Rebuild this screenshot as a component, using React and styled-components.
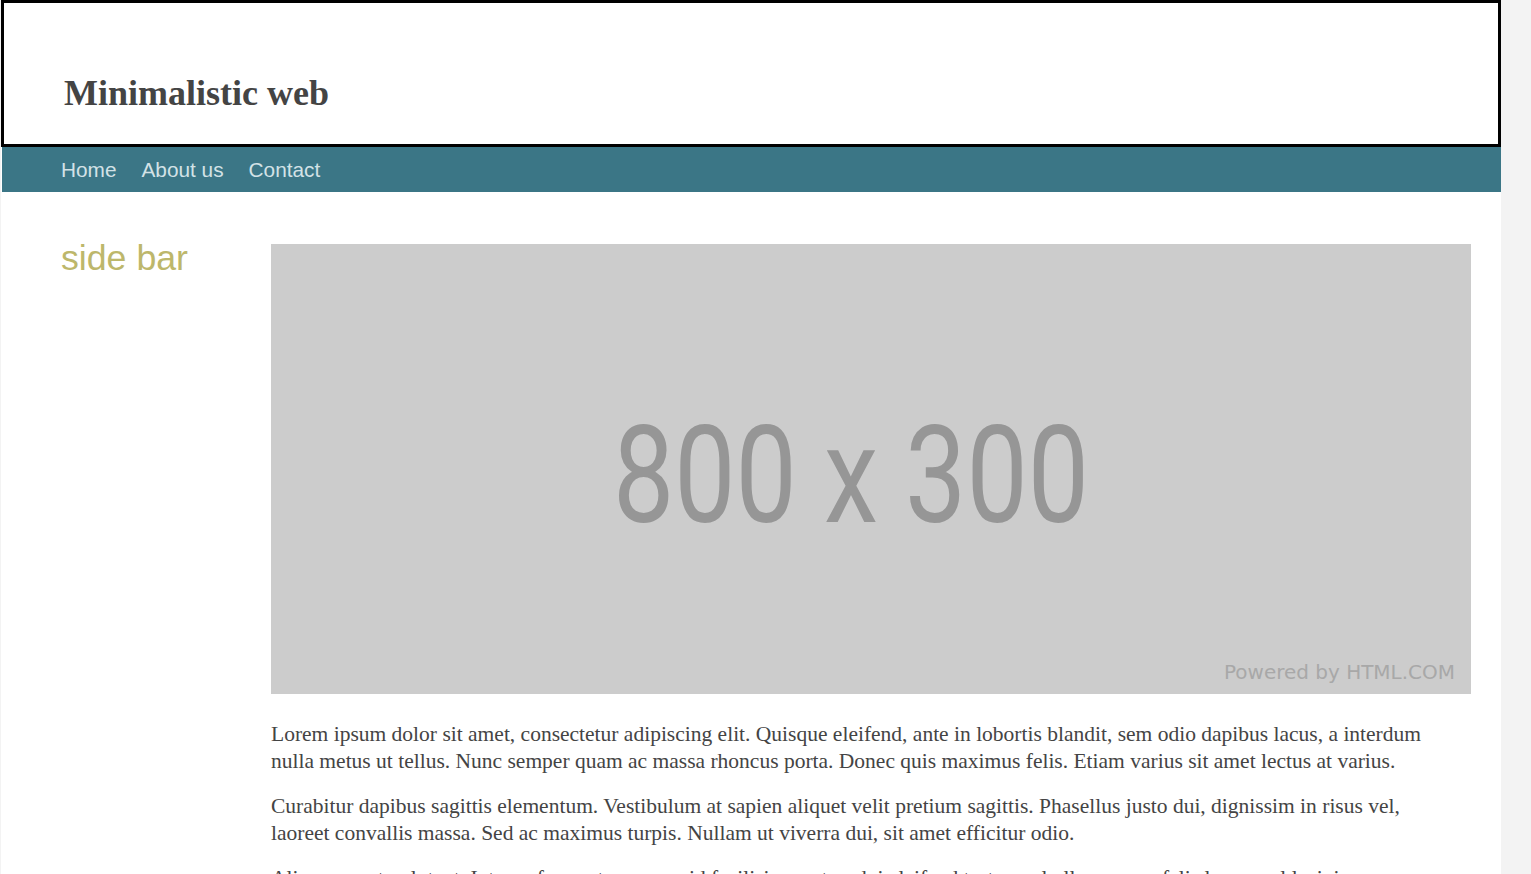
import React from "react";
import styled, { createGlobalStyle } from "styled-components";

const Global = createGlobalStyle`
  html, body { margin: 0; padding: 0; }
  body {
    background: #f3f3f3;
    font-family: "Liberation Serif", "Times New Roman", serif;
    overflow: hidden;
  }
`;

const Page = styled.div`
  width: 1500px;
  margin-left: 1px;
  min-height: 874px;
  background: #ffffff;
`;

const Header = styled.header`
  box-sizing: border-box;
  height: 147px;
  border: 3px solid #000;
  display: flex;
  align-items: flex-end;
  padding: 0 0 31px 60px;
`;

const Title = styled.h1`
  margin: 0;
  font-family: "Liberation Serif", "Times New Roman", serif;
  font-weight: bold;
  font-size: 36px;
  line-height: 40px;
  color: #444;
`;

const Nav = styled.nav`
  height: 45px;
  background: #3b7686;
  display: flex;
  align-items: center;
  gap: 25px;
  padding-left: 59px;
  margin-left: 1px;
`;

const NavLink = styled.a`
  font-family: "Liberation Sans", Arial, sans-serif;
  font-size: 20.8px;
  color: #d3e2e6;
  text-decoration: none;
  padding-top: 1px;
`;

const Content = styled.div`
  display: grid;
  grid-template-columns: 270px 1200px;
  padding-top: 52px;
`;

const Sidebar = styled.aside`
  padding-left: 60px;
`;

const SideTitle = styled.h2`
  margin: -6px 0 0 0;
  font-family: "Liberation Sans", Arial, sans-serif;
  font-weight: normal;
  font-size: 35.7px;
  line-height: 40px;
  color: #bdb76b;
`;

const Main = styled.main`
  display: flex;
  flex-direction: column;
`;

const Banner = styled.svg`
  display: block;
  width: 1200px;
  height: 450px;
`;

const Text = styled.p`
  margin: 18px 0 0 0;
  padding-right: 40px;
  font-family: "Liberation Serif", "Times New Roman", serif;
  font-size: 21.5px;
  line-height: 27px;
  color: #444;
  &:first-of-type { margin-top: 27px; }
`;

export default function App() {
  return (
    <>
      <Global />
      <Page>
        <Header>
          <Title>Minimalistic web</Title>
        </Header>
        <Nav>
          <NavLink href="#">Home</NavLink>
          <NavLink href="#">About us</NavLink>
          <NavLink href="#">Contact</NavLink>
        </Nav>
        <Content>
          <Sidebar>
            <SideTitle>side bar</SideTitle>
          </Sidebar>
          <Main>
            <Banner viewBox="0 0 1200 450">
              <rect x="0" y="0" width="1200" height="450" fill="#cccccc" />
              <text
                x="342"
                y="278"
                fontFamily="Roboto, 'Liberation Sans', sans-serif"
                fontSize="136"
                fill="#969696"
                textLength="476"
                lengthAdjust="spacingAndGlyphs"
              >
                800 x 300
              </text>
              <text
                x="953"
                y="435"
                fontFamily="'DejaVu Sans', sans-serif"
                fontSize="19"
                fill="#a8a8a8"
                textLength="231"
                lengthAdjust="spacingAndGlyphs"
              >
                Powered by HTML.COM
              </text>
            </Banner>
            <Text>
              Lorem ipsum dolor sit amet, consectetur adipiscing elit. Quisque eleifend, ante in lobortis blandit, sem odio dapibus lacus, a interdum nulla metus ut tellus. Nunc semper quam ac massa rhoncus porta. Donec quis maximus felis. Etiam varius sit amet lectus at varius.
            </Text>
            <Text>
              Curabitur dapibus sagittis elementum. Vestibulum at sapien aliquet velit pretium sagittis. Phasellus justo dui, dignissim in risus vel, laoreet convallis massa. Sed ac maximus turpis. Nullam ut viverra dui, sit amet efficitur odio.
            </Text>
            <Text>
              Aliquam erat volutpat. Integer fermentum, nunc id facilisis egestas, dui eleifend tortor, vel ullamcorper felis lorem vel lacinia nunc. Maecenas posuere quam sed nibh tincidunt, vitae pulvinar lectus iaculis.
            </Text>
          </Main>
        </Content>
      </Page>
    </>
  );
}
